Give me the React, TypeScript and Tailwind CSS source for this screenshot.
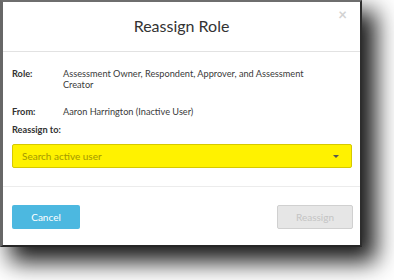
import React from "react";

export default function App() {
  return (
    <div className="w-[394px] h-[280px] bg-white overflow-hidden" style={{ fontFamily: "Lato, 'Open Sans', sans-serif" }}>
      <div className="relative w-[362px] h-[247px] bg-white border-t-[2px] border-l-[3px] border-r-[2px] border-b-[2px] border-t-[#6e6e6e] border-l-[#676767] border-r-[#2e2e2e] border-b-[#262626] shadow-[12px_13px_22px_2px_rgba(0,0,0,0.9)] flex flex-col">
        <div className="h-[50px] flex items-center justify-center border-b border-[#e2e2e2] shrink-0">
          <span className="text-[16px] text-[#333] leading-none pb-[1px]">Reassign Role</span>
        </div>
        <span className="absolute right-[13px] top-[5px] text-[15px] leading-none font-bold text-[#d2d2d2]">×</span>
        <div className="pl-[9px] pr-[8px] pt-[16px] pb-[18px] border-b border-[#ececec] text-[9.2px] leading-[11px] text-[#3a3a3a]">
          <div className="flex">
            <span className="w-[51px] shrink-0 font-bold text-[#333]">Role:</span>
            <span className="w-[250px]">Assessment Owner, Respondent, Approver, and Assessment Creator</span>
          </div>
          <div className="flex mt-[16px]">
            <span className="w-[51px] shrink-0 font-bold text-[#333]">From:</span>
            <span>Aaron Harrington (Inactive User)</span>
          </div>
          <div className="mt-[7px] font-bold text-[#333]">Reassign to:</div>
          <div className="mt-[9px] h-[24px] bg-[#fff200] border border-[#d6c900] rounded-[2px] flex items-center justify-between pl-[9px] pr-[12px]">
            <span className="text-[10px] text-[#a39800]">Search active user</span>
            <span className="w-0 h-0 border-l-[3px] border-r-[3px] border-t-[3px] border-l-transparent border-r-transparent border-t-[#555]" />
          </div>
        </div>
        <div className="pl-[9px] pr-[7px] pt-[18px] flex justify-between">
          <button className="w-[68px] h-[24px] bg-[#4cb8e0] rounded-[2px] text-white text-[10px] flex items-center justify-center">Cancel</button>
          <button className="w-[76px] h-[24px] bg-[#e6e6e6] border border-[#d0d0d0] rounded-[2px] text-[#c4c4c4] text-[10px] flex items-center justify-center">Reassign</button>
        </div>
      </div>
    </div>
  );
}
